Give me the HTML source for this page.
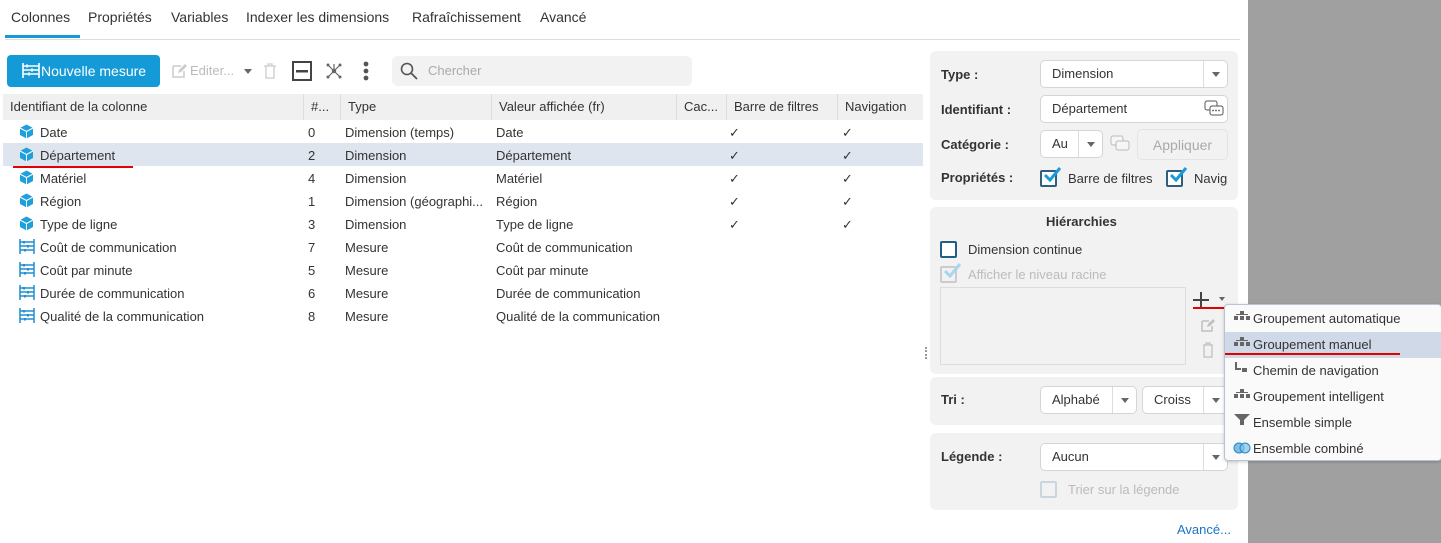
<!DOCTYPE html>
<html><head><meta charset="utf-8"><style>
*{box-sizing:border-box;margin:0;padding:0}
body{width:1441px;height:543px;overflow:hidden;background:#fff;font-family:"Liberation Sans",sans-serif;font-size:13px;color:#333;position:relative}
.abs{position:absolute}
.gray{left:1248px;top:0;width:193px;height:543px;background:#a0a0a0}
.tabs span{position:absolute;top:9px;font-size:14px;color:#333}
.hdr{position:absolute;top:94px;left:3px;width:920px;height:26px;background:#f0f0f0}
.hdr div{position:absolute;top:0;height:26px;line-height:26px;padding-left:7px;border-right:1px solid #ddd;font-size:13px}
.row{position:absolute;left:3px;width:920px;height:23px;line-height:25px}
.row span{position:absolute}
.box{position:absolute;left:930px;width:308px;background:#f2f2f2;border-radius:6px}
.lbl{position:absolute;font-weight:bold;font-size:13px;color:#333}
.inp{position:absolute;background:#fff;border:1px solid #d5d5d5;border-radius:5px;height:28px;line-height:26px;padding-left:11px}
.arr{position:absolute;right:0;top:0;width:24px;height:26px;border-left:1px solid #ddd}
.arr:after{content:"";position:absolute;left:8px;top:11px;border:4px solid transparent;border-top:5px solid #666}
.cb{position:absolute;width:17px;height:17px;border:2px solid #2f5f7f;border-radius:2px;background:#fff}
.menu{position:absolute;left:1224px;top:304px;width:218px;height:157px;background:#fafafa;border:1px solid #b8c4d4;border-radius:4px;box-shadow:0 1px 3px rgba(0,0,0,.2)}
.mi{position:absolute;left:0;width:216px;height:26px;line-height:26px;padding-left:28px;font-size:13px}
</style></head><body>
<div class="abs gray"></div>
<div class="tabs">
<span style="left:11px">Colonnes</span><span style="left:88px">Propriétés</span><span style="left:171px">Variables</span><span style="left:246px">Indexer les dimensions</span><span style="left:412px">Rafraîchissement</span><span style="left:540px">Avancé</span>
</div>
<div class="abs" style="left:5px;top:35px;width:75px;height:3px;background:#149bd7"></div>
<div class="abs" style="left:5px;top:39px;width:1235px;height:1px;background:#ddd"></div>

<div class="abs" style="left:7px;top:55px;width:153px;height:32px;background:#149bd7;border-radius:4px;color:#fff;font-size:14px;line-height:32px;padding-left:34px">Nouvelle mesure</div>
<svg class="abs" style="left:22px;top:62px" width="18" height="17"><g stroke="#fff" stroke-width="1.6" fill="none"><path d="M1 1v15M17 1v15M1 4h16M1 8h16M1 12h16"/></g><g fill="#fff"><rect x="4" y="2.5" width="2" height="3"/><rect x="9" y="6.5" width="2" height="3"/><rect x="6" y="10.5" width="2" height="3"/></g></svg>
<svg class="abs" style="left:171px;top:63px" width="16" height="16"><path d="M2 3h8M2 3v11h11V8" stroke="#ccc" stroke-width="1.5" fill="none"/><path d="M7 10l1-3 6-6 2 2-6 6z" fill="#ccc"/></svg>
<span class="abs" style="left:190px;top:63px;color:#bbb;font-size:13px">Editer...</span>
<div class="abs" style="left:244px;top:69px;border:4px solid transparent;border-top:5px solid #666"></div>
<svg class="abs" style="left:263px;top:63px" width="14" height="16"><path d="M1 3h12M5 3V1h4v2M3 3v12h8V3" stroke="#ccc" stroke-width="1.3" fill="none"/></svg>
<svg class="abs" style="left:292px;top:61px" width="20" height="20"><rect x="1" y="1" width="18" height="18" stroke="#444" stroke-width="2" fill="none"/><rect x="4" y="9" width="12" height="2.5" fill="#444"/></svg>
<svg class="abs" style="left:325px;top:62px" width="18" height="18"><g stroke="#666" stroke-width="1.2" fill="none"><path d="M9 9L3 3M9 9L15 3M9 9L3 15M9 9L15 15M9 9V2"/></g><circle cx="9" cy="9" r="2.2" fill="#666"/><g fill="#666"><circle cx="3" cy="3" r="1.5"/><circle cx="15" cy="3" r="1.5"/><circle cx="3" cy="15" r="1.5"/><circle cx="15" cy="15" r="1.5"/></g></svg>
<svg class="abs" style="left:362px;top:61px" width="8" height="20"><circle cx="4" cy="3" r="2.4" fill="#555"/><circle cx="4" cy="10" r="2.4" fill="#555"/><circle cx="4" cy="17" r="2.4" fill="#555"/></svg>
<div class="abs" style="left:392px;top:56px;width:300px;height:30px;background:#f2f2f2;border-radius:6px"></div>
<svg class="abs" style="left:400px;top:62px" width="18" height="18"><circle cx="7" cy="7" r="5.5" stroke="#555" stroke-width="1.6" fill="none"/><path d="M11 11l6 6" stroke="#555" stroke-width="1.8"/></svg>
<span class="abs" style="left:428px;top:63px;color:#aaa;font-size:13px">Chercher</span>

<div class="hdr">
<div style="left:0;width:301px">Identifiant de la colonne</div>
<div style="left:301px;width:37px">#...</div>
<div style="left:338px;width:151px">Type</div>
<div style="left:489px;width:185px">Valeur affichée (fr)</div>
<div style="left:674px;width:50px">Cac...</div>
<div style="left:724px;width:111px">Barre de filtres</div>
<div style="left:835px;width:85px;border-right:none">Navigation</div>
</div>

<div class="abs" style="left:3px;top:143px;width:920px;height:23px;background:#dfe5ee"></div>
<div id="rows"></div>
<div class="abs" style="left:13px;top:166px;width:120px;height:2px;background:#e30000"></div>

<div class="box" style="top:51px;height:149px"></div>
<span class="lbl" style="left:941px;top:67px">Type :</span>
<div class="inp" style="left:1040px;top:60px;width:188px">Dimension<div class="arr"></div></div>
<span class="lbl" style="left:941px;top:102px">Identifiant :</span>
<div class="inp" style="left:1040px;top:95px;width:188px">Département</div>
<svg class="abs" style="left:1204px;top:100px" width="20" height="17"><rect x="1" y="1" width="12" height="9" rx="2" stroke="#555" fill="#fff"/><rect x="6" y="6" width="13" height="9" rx="2" stroke="#555" fill="#fff"/><g fill="#555"><circle cx="9" cy="10.5" r=".9"/><circle cx="12" cy="10.5" r=".9"/><circle cx="15" cy="10.5" r=".9"/></g></svg>
<span class="lbl" style="left:941px;top:137px">Catégorie :</span>
<div class="inp" style="left:1040px;top:130px;width:63px">Au<div class="arr"></div></div>
<svg class="abs" style="left:1110px;top:135px" width="20" height="17" opacity=".35"><rect x="1" y="1" width="12" height="9" rx="2" stroke="#555" fill="#fff"/><rect x="6" y="6" width="13" height="9" rx="2" stroke="#555" fill="#fff"/></svg>
<div class="abs" style="left:1137px;top:129px;width:91px;height:31px;border:1px solid #e4e4e4;border-radius:5px;color:#aaa;font-size:14px;line-height:30px;text-align:center">Appliquer</div>
<span class="lbl" style="left:941px;top:170px">Propriétés :</span>
<div class="cb" style="left:1040px;top:170px"></div>
<svg class="abs" style="left:1042px;top:166px" width="20" height="18"><path d="M3 9l5 5L18 2" stroke="#1a9ad6" stroke-width="3" fill="none"/></svg>
<span class="abs" style="left:1068px;top:171px;font-size:13px">Barre de filtres</span>
<div class="cb" style="left:1166px;top:170px"></div>
<svg class="abs" style="left:1168px;top:166px" width="20" height="18"><path d="M3 9l5 5L18 2" stroke="#1a9ad6" stroke-width="3" fill="none"/></svg>
<span class="abs" style="left:1194px;top:171px;font-size:13px">Navig</span>

<div class="box" style="top:207px;height:167px"></div>
<span class="lbl" style="left:1046px;top:214px">Hiérarchies</span>
<div class="cb" style="left:940px;top:241px;border-color:#1f5f85"></div>
<span class="abs" style="left:968px;top:242px">Dimension continue</span>
<div class="cb" style="left:940px;top:266px;border-color:#ccc;background:#f2f2f2"></div>
<svg class="abs" style="left:942px;top:262px" width="20" height="18"><path d="M3 9l5 5L18 2" stroke="#a8d6ee" stroke-width="3" fill="none"/></svg>
<span class="abs" style="left:968px;top:267px;color:#bbb">Afficher le niveau racine</span>
<div class="abs" style="left:940px;top:287px;width:246px;height:78px;border:1px solid #ddd"></div>
<svg class="abs" style="left:1193px;top:292px" width="16" height="16"><path d="M8 0v16M0 8h16" stroke="#444" stroke-width="2"/></svg>
<div class="abs" style="left:1219px;top:297px;border:3.5px solid transparent;border-top:4px solid #666"></div>
<div class="abs" style="left:1193px;top:307px;width:32px;height:2px;background:#e30000"></div>
<svg class="abs" style="left:1200px;top:318px" width="16" height="15" opacity=".35"><path d="M2 3h7M2 3v10h10V8" stroke="#666" stroke-width="1.5" fill="none"/><path d="M7 9l1-3 5-5 2 2-5 5z" fill="#666"/></svg>
<svg class="abs" style="left:1202px;top:342px" width="12" height="16" opacity=".35"><path d="M1 3h10M4 3V1h4v2M2 3v12h8V3" stroke="#666" stroke-width="1.3" fill="none"/></svg>
<div class="abs" style="left:925px;top:347px;width:2px;height:12px;border-left:2px dotted #999"></div>

<div class="box" style="top:377px;height:48px"></div>
<span class="lbl" style="left:941px;top:392px">Tri :</span>
<div class="inp" style="left:1040px;top:386px;width:97px;overflow:hidden">Alphabé<div class="arr"></div></div>
<div class="inp" style="left:1142px;top:386px;width:86px;overflow:hidden">Croiss<div class="arr"></div></div>

<div class="box" style="top:433px;height:77px"></div>
<span class="lbl" style="left:941px;top:449px">Légende :</span>
<div class="inp" style="left:1040px;top:443px;width:188px">Aucun<div class="arr"></div></div>
<div class="cb" style="left:1040px;top:481px;border:2px solid #c8d6e0;background:#f2f2f2"></div>
<span class="abs" style="left:1068px;top:482px;color:#bbb">Trier sur la légende</span>
<span class="abs" style="left:1177px;top:522px;color:#1a73c8">Avancé...</span>

<div class="menu">
<div class="mi" style="top:1px">Groupement automatique</div>
<div class="mi" style="top:27px;background:#cfd9e8">Groupement manuel</div>
<div class="mi" style="top:53px">Chemin de navigation</div>
<div class="mi" style="top:79px">Groupement intelligent</div>
<div class="mi" style="top:105px">Ensemble simple</div>
<div class="mi" style="top:131px">Ensemble combiné</div>
</div>
<div class="abs" style="left:1225px;top:353px;width:175px;height:2px;background:#e30000"></div>
<svg class="abs" style="left:1233px;top:310px" width="18" height="150">
<g fill="#666">
<g id="h"><rect x="7" y="1" width="4" height="3"/><rect x="1" y="6" width="4" height="4"/><rect x="7" y="6" width="4" height="4"/><rect x="13" y="6" width="4" height="4"/><rect x="3" y="4" width="12" height="1"/></g>
<use href="#h" y="26"/><use href="#h" y="78"/>
<path d="M2 52h2v6h4v2H2zM9 58h5v4H9z"/>
<path d="M1 104h16l-6 6v5H7v-5z"/>
</g>
<circle cx="6" cy="138" r="5" fill="#7cc0e6" stroke="#2a86c4"/><circle cx="12" cy="138" r="5" fill="#7cc0e6" stroke="#2a86c4" fill-opacity=".7"/>
</svg>

<script>
var d=[["Date","0","Dimension (temps)","Date",1],["Département","2","Dimension","Département",1],["Matériel","4","Dimension","Matériel",1],["Région","1","Dimension (géographi...","Région",1],["Type de ligne","3","Dimension","Type de ligne",1],["Coût de communication","7","Mesure","Coût de communication",0],["Coût par minute","5","Mesure","Coût par minute",0],["Durée de communication","6","Mesure","Durée de communication",0],["Qualité de la communication","8","Mesure","Qualité de la communication",0]];
var h="";
var cube='<svg style="position:absolute;left:16px;top:4px" width="15" height="15"><path d="M7.5 0.5L14 4v7l-6.5 3.5L1 11V4z" fill="#1ea0dc"/><path d="M1 4l6.5 3.5L14 4M7.5 7.5v7" stroke="#fff" stroke-width="1" fill="none"/></svg>';
var mes='<svg style="position:absolute;left:16px;top:4px" width="16" height="15"><g stroke="#1e8fd0" stroke-width="1.5" fill="none"><path d="M1 0v15M15 0v15M1 3h14M1 7h14M1 11h14"/></g><g fill="#1e8fd0"><rect x="4" y="2" width="2" height="2.5"/><rect x="8" y="6" width="2" height="2.5"/><rect x="5" y="10" width="2" height="2.5"/></g></svg>';
d.forEach(function(r,i){h+='<div class="row" style="top:'+(120+i*23)+'px">'+(r[4]?cube:mes)+'<span style="left:37px">'+r[0]+'</span><span style="left:305px">'+r[1]+'</span><span style="left:342px">'+r[2]+'</span><span style="left:493px">'+r[3]+'</span>'+(r[4]?'<span style="left:726px">✓</span><span style="left:839px">✓</span>':'')+'</div>';});
document.getElementById("rows").innerHTML=h;
</script>
</body></html>
